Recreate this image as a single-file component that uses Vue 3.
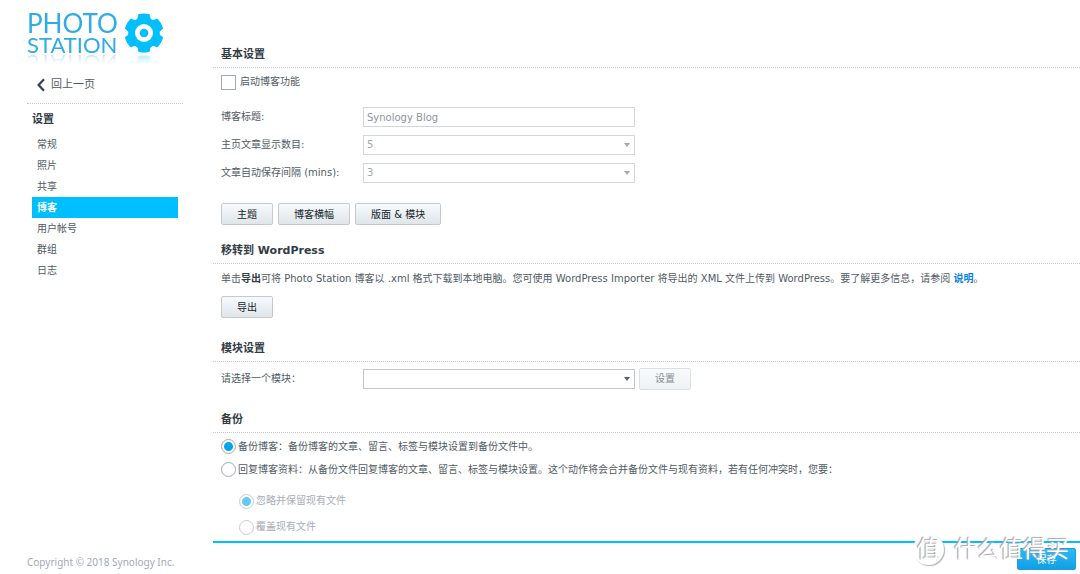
<script setup>
import { ref } from 'vue'

const navItems = ['常规', '照片', '共享', '博客', '用户帐号', '群组', '日志']
const active = ref('博客')
const enabled = ref(false)
const mode = ref('backup')
const teeth = [0, 60, 120, 180, 240, 300]
</script>

<template>
  <div class="page">
    <aside class="sidebar">
      <div class="logo">
        <div class="wordmark">
          <span class="photo">PHOTO</span>
          <span class="station">STATION</span>
        </div>
        <svg class="gear" viewBox="0 0 40 40" aria-hidden="true">
          <g fill="#00bfff">
            <circle cx="20" cy="20" r="15.5" />
            <path
              v-for="angle in teeth"
              :key="angle"
              :transform="`rotate(${angle} 20 20)`"
              d="M11.5 7.5 Q14 6 14 2.5 Q14 1.2 15.4 0.9 Q20 -0.1 24.6 0.9 Q26 1.2 26 2.5 Q26 6 28.5 7.5 Z"
            />
          </g>
          <circle cx="20" cy="20" r="9" fill="#fff" />
          <circle cx="20" cy="20" r="4.3" fill="#00bfff" />
        </svg>
      </div>
      <a class="back" href="#">
        <svg viewBox="0 0 8 14" aria-hidden="true">
          <path d="M7 1.2 L1.6 7 L7 12.8" fill="none" stroke="#37404c" stroke-width="2.2" />
        </svg>
        回上一页
      </a>
      <h1>设置</h1>
      <nav>
        <a
          v-for="item in navItems"
          :key="item"
          href="#"
          :class="{ active: item === active }"
          @click.prevent="active = item"
        >{{ item }}</a>
      </nav>
      <p class="copyright">Copyright © 2018 Synology Inc.</p>
    </aside>

    <main class="main">
      <div class="content">
        <section class="basic">
          <h2>基本设置</h2>
          <label class="check-row"><input v-model="enabled" type="checkbox" />启动博客功能</label>
          <div class="fields">
            <div class="row">
              <label for="title">博客标题:</label>
              <input id="title" class="text" type="text" value="Synology Blog" disabled />
            </div>
            <div class="row">
              <label for="count">主页文章显示数目:</label>
              <span class="select">
                <select id="count" disabled><option>5</option></select>
              </span>
            </div>
            <div class="row">
              <label for="interval">文章自动保存间隔 (mins):</label>
              <span class="select">
                <select id="interval" disabled><option>3</option></select>
              </span>
            </div>
          </div>
          <div class="buttons">
            <button type="button">主题</button>
            <button type="button">博客横幅</button>
            <button type="button">版面 &amp; 模块</button>
          </div>
        </section>

        <section class="export">
          <h2>移转到 WordPress</h2>
          <p>单击<b>导出</b>可将 Photo Station 博客以 .xml 格式下载到本地电脑。您可使用 WordPress Importer 将导出的 XML 文件上传到 WordPress。要了解更多信息，请参阅 <a href="#">说明</a>。</p>
          <button type="button">导出</button>
        </section>

        <section class="module">
          <h2>模块设置</h2>
          <div class="row">
            <label for="module">请选择一个模块：</label>
            <span class="select">
              <select id="module"><option></option></select>
            </span>
            <button type="button" disabled>设置</button>
          </div>
        </section>

        <section class="backup">
          <h2>备份</h2>
          <label class="radio-row">
            <input v-model="mode" type="radio" name="mode" value="backup" />备份博客：备份博客的文章、留言、标签与模块设置到备份文件中。
          </label>
          <label class="radio-row">
            <input v-model="mode" type="radio" name="mode" value="restore" />回复博客资料：从备份文件回复博客的文章、留言、标签与模块设置。这个动作将会合并备份文件与现有资料，若有任何冲突时，您要：
          </label>
          <div class="sub">
            <label class="radio-row"><input type="radio" name="conflict" checked disabled />忽略并保留现有文件</label>
            <label class="radio-row"><input type="radio" name="conflict" disabled />覆盖现有文件</label>
          </div>
        </section>
      </div>
      <footer class="footer">
        <button class="save" type="button">保存</button>
      </footer>
    </main>

    <div class="watermark">
      <span class="seal">值</span>
      <span>什么值得买</span>
    </div>
  </div>
</template>

<style>
body {
  margin: 0;
  background: #fff;
}
</style>

<style scoped>
.page {
  position: relative;
  display: flex;
  height: 100vh;
  overflow: hidden;
  color: #505a64;
  font: 10px/14px "DejaVu Sans", "Noto Sans CJK SC", sans-serif;
}
* {
  box-sizing: border-box;
}
a {
  text-decoration: none;
  color: inherit;
}
p,
h1,
h2 {
  margin: 0;
}
h1,
h2 {
  font-size: 11px;
  font-weight: bold;
  color: #323c46;
}
input,
select,
button {
  margin: 0;
  font: inherit;
}

.sidebar {
  display: flex;
  flex-direction: column;
  flex: none;
  width: 213px;
  padding: 13px 30px 5px 27px;
}
.logo {
  display: flex;
  gap: 3px;
  height: 41px;
  -webkit-box-reflect: below 0 linear-gradient(transparent 75%, rgba(0, 0, 0, 0.3));
}
.wordmark {
  display: flex;
  flex-direction: column;
  width: 94px;
  gap: 4px;
  padding-top: 1px;
  color: #2fabe9;
  font-family: Lato, sans-serif;
}
.photo {
  font-size: 26px;
  line-height: 18px;
}
.station {
  font-size: 22px;
  line-height: 18px;
}
.gear {
  width: 40px;
  height: 40px;
}
.back {
  display: flex;
  align-items: center;
  gap: 6px;
  height: 39px;
  margin-top: 11px;
  padding: 1px 0 0 10px;
  border-bottom: 1px dotted #c8ccd0;
  font-size: 11px;
}
.back svg {
  width: 8px;
  height: 14px;
}
h1 {
  padding: 8px 5px 6px;
  line-height: 16px;
}
nav {
  display: flex;
  flex-direction: column;
  margin: 0 5px;
}
nav a {
  padding-left: 5px;
  line-height: 21px;
}
nav a.active {
  background: #00bfff;
  color: #fff;
  font-weight: bold;
}
.copyright {
  margin-top: auto;
  color: #a0aab4;
  font-family: "Noto Sans", sans-serif;
  white-space: nowrap;
}

.main {
  display: flex;
  flex: 1;
  flex-direction: column;
  min-width: 0;
}
.content {
  flex: 1;
  min-height: 0;
  padding-top: 39px;
  overflow: hidden;
}
section {
  display: flex;
  flex-direction: column;
  align-items: flex-start;
  padding-left: 8px;
}
h2 {
  align-self: stretch;
  margin-left: -8px;
  padding: 4px 0 0 8px;
  border-bottom: 1px dotted #c8ccd0;
  line-height: 24px;
}
.check-row,
.radio-row {
  display: flex;
  align-items: center;
}
.check-row {
  gap: 4px;
  height: 28px;
}
input[type="checkbox"] {
  width: 15px;
  height: 15px;
  border: 1px solid #a0aab4;
  background: #fff;
  appearance: none;
}
input[type="checkbox"]:checked {
  background: #00aff0;
}
.fields {
  padding-top: 7px;
}
.row {
  display: flex;
  align-items: center;
  height: 28px;
}
.row label {
  width: 142px;
}
.text,
select {
  width: 272px;
  height: 20px;
  padding: 0 3px;
  border: 1px solid #c0c6cc;
  border-radius: 0;
  background: #fff;
  color: #505a64;
  appearance: none;
}
.text:disabled,
select:disabled {
  border-color: #d4d7d9;
  color: #a0a8b0;
  opacity: 1;
}
.text:disabled {
  color: #8c949c;
}
.select {
  position: relative;
  display: flex;
}
.select::after {
  position: absolute;
  top: 8px;
  right: 5px;
  border-style: solid;
  border-width: 4px 3px 0;
  border-color: #59636d transparent;
  content: "";
  pointer-events: none;
}
.select:has(:disabled)::after {
  border-color: #a4a9ae transparent;
}
button {
  height: 22px;
  padding: 1px 15px 0;
  border: 1px solid #c4cad0;
  border-radius: 2px;
  background: linear-gradient(#f6fafd, #e0e5ea);
  color: #141e28;
}
button:disabled {
  border-color: #dce0e4;
  background: linear-gradient(#f8fbfd, #eff2f5);
  color: #858c93;
}
.buttons {
  display: flex;
  gap: 5px;
  padding: 16px 0 10px;
}
.export {
  padding-bottom: 15px;
}
.export p {
  padding: 8px 0 10px;
}
.export b {
  color: #323c46;
}
.export a {
  color: #057feb;
  font-weight: bold;
}
.module {
  padding-bottom: 11px;
}
.module .row {
  height: 31px;
  padding-top: 2px;
}
.module button {
  margin-left: 4px;
}
.radio-row {
  gap: 2px;
  height: 23px;
  white-space: nowrap;
}
.backup h2 {
  margin-bottom: 2px;
}
input[type="radio"] {
  width: 15px;
  height: 15px;
  border: 1px solid #a0aab4;
  border-radius: 50%;
  background: #fff;
  appearance: none;
}
input[type="radio"]:checked {
  background: radial-gradient(circle, #00a5f0 0 4px, #fff 5px);
}
.sub {
  padding: 7px 0 0 18px;
  color: #a8adb3;
}
.sub .radio-row {
  height: 26px;
}
.sub input {
  opacity: 0.6;
}
.footer {
  display: flex;
  justify-content: flex-end;
  height: 33px;
  padding: 5px 4px 0 0;
  border-top: 2px solid #00bfff;
}
.save {
  width: 59px;
  border-color: #189fe0;
  background: linear-gradient(#2abbf7, #129ee6);
  color: #fff;
}
.watermark {
  position: absolute;
  right: 11px;
  bottom: 9px;
  display: flex;
  align-items: center;
  gap: 10px;
  color: #fff;
  font-size: 23px;
  line-height: 32px;
  text-shadow: -1px -1px 1px #a8a8a8, -1px 0 0 #c0c0c0;
  pointer-events: none;
}
.seal {
  width: 31px;
  height: 31px;
  border-radius: 50%;
  background: #fff;
  box-shadow: 1px 1px 1px #b0b0b0;
  line-height: 30px;
  text-align: center;
}
</style>
